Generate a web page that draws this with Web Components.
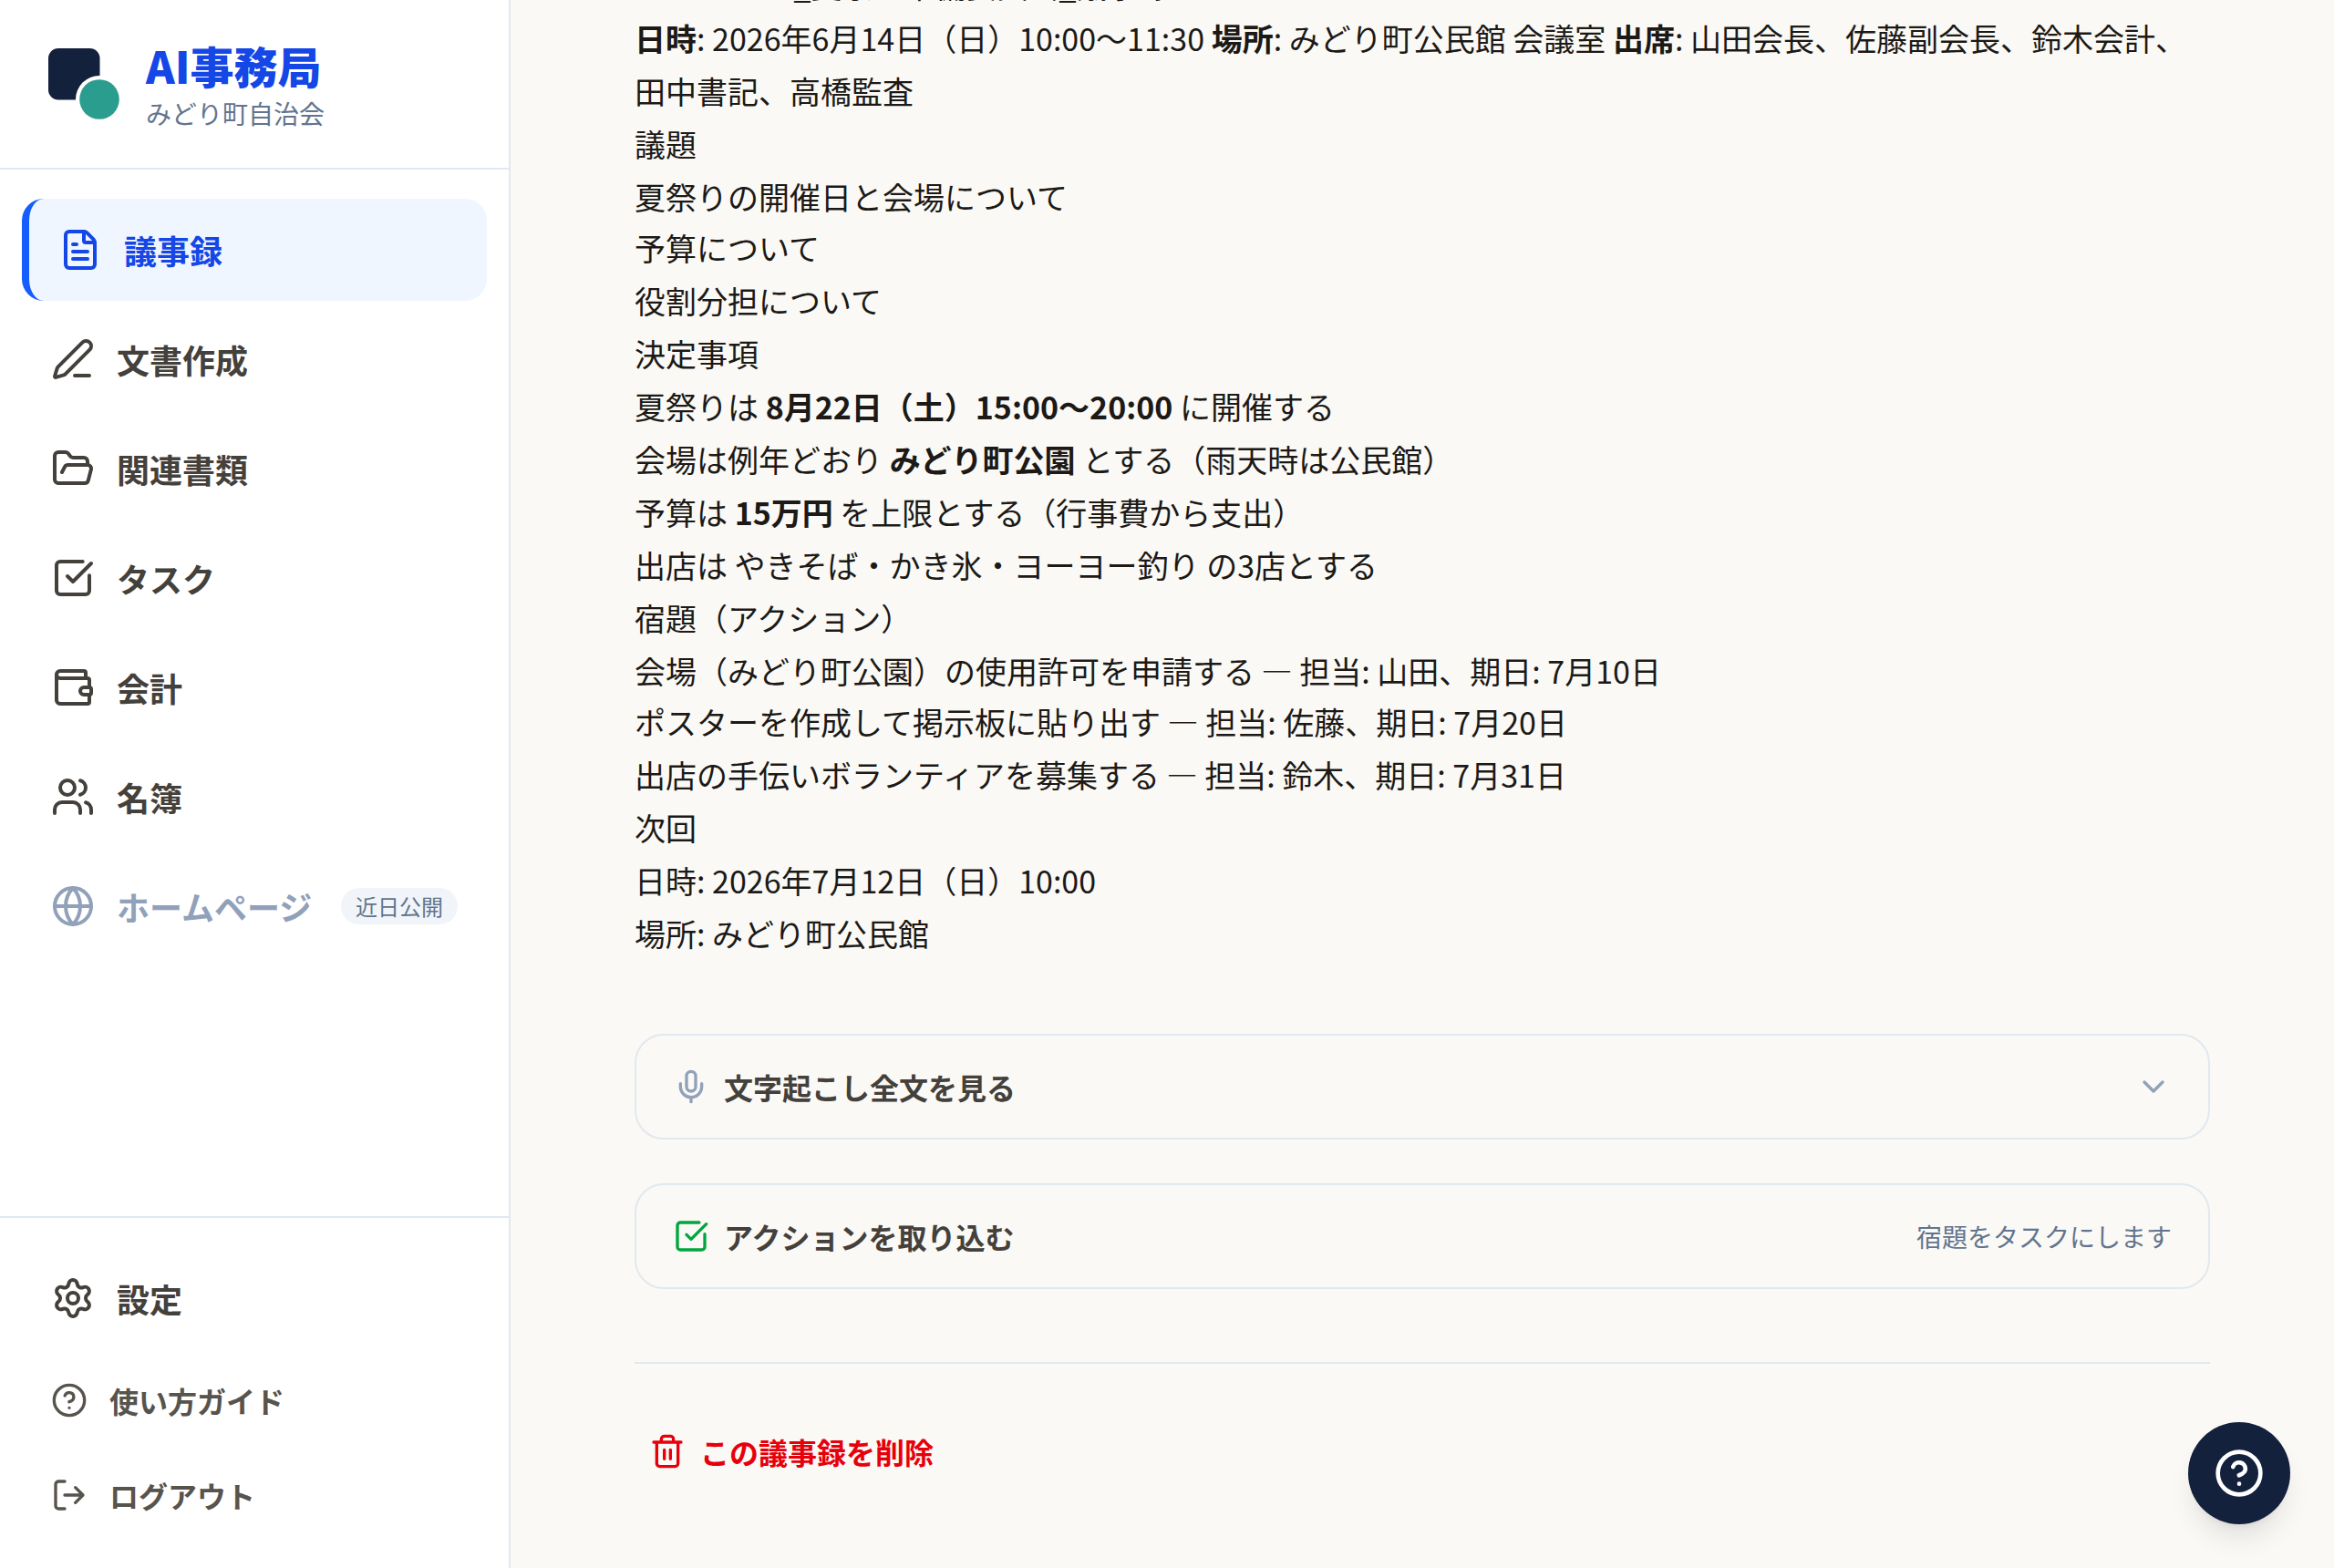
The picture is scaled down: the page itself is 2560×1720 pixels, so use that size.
<!DOCTYPE html>
<html lang="ja">
<head>
<meta charset="utf-8">
<title>AI事務局</title>
<style>
html,body{margin:0;height:100%;overflow:hidden}
body{font-family:"Noto Sans CJK JP",sans-serif;font-size:34px;line-height:1.7;color:#1c1917;background:#faf9f5}
</style>
</head>
<body>
<app-shell>
  <app-sidebar slot="side">
    <brand-mark slot="brand" sub="みどり町自治会">AI事務局</brand-mark>
    <nav-item icon="file" active>議事録</nav-item>
    <nav-item icon="pen">文書作成</nav-item>
    <nav-item icon="folder">関連書類</nav-item>
    <nav-item icon="check">タスク</nav-item>
    <nav-item icon="wallet">会計</nav-item>
    <nav-item icon="users">名簿</nav-item>
    <nav-item icon="globe" muted badge="近日公開">ホームページ</nav-item>
    <nav-item slot="foot" icon="gear">設定</nav-item>
    <nav-item slot="foot" icon="help" small>使い方ガイド</nav-item>
    <nav-item slot="foot" icon="logout" small>ログアウト</nav-item>
  </app-sidebar>
  <minutes-body>
    <p>2026-06-14_夏祭り準備委員会_議事録</p>
    <p><b>日時</b>: 2026年6月14日（日）10:00〜11:30 <b>場所</b>: みどり町公民館 会議室 <b>出席</b>: 山田会長、佐藤副会長、鈴木会計、田中書記、高橋監査</p>
    <p>議題</p>
    <p>夏祭りの開催日と会場について</p>
    <p class="tight">予算について</p>
    <p>役割分担について</p>
    <p>決定事項</p>
    <p>夏祭りは <b>8月22日（土）15:00〜20:00</b> に開催する</p>
    <p>会場は例年どおり <b>みどり町公園</b> とする（雨天時は公民館）</p>
    <p>予算は <b>15万円</b> を上限とする（行事費から支出）</p>
    <p>出店は やきそば・かき氷・ヨーヨー釣り の3店とする</p>
    <p>宿題（アクション）</p>
    <p>会場（みどり町公園）の使用許可を申請する — 担当: 山田、期日: 7月10日</p>
    <p class="tight">ポスターを作成して掲示板に貼り出す — 担当: 佐藤、期日: 7月20日</p>
    <p>出店の手伝いボランティアを募集する — 担当: 鈴木、期日: 7月31日</p>
    <p>次回</p>
    <p>日時: 2026年7月12日（日）10:00</p>
    <p>場所: みどり町公民館</p>
  </minutes-body>
  <action-card icon="mic" tone="#90a1b9">文字起こし全文を見る<ui-icon slot="end" name="chevron" style="color:#90a1b9"></ui-icon></action-card>
  <action-card icon="check" tone="#00a63e">アクションを取り込む<span slot="end">宿題をタスクにします</span></action-card>
  <danger-zone>この議事録を削除</danger-zone>
  <help-fab slot="float"></help-fab>
</app-shell>
<script>
const ICONS={
file:'<path d="M6 22a2 2 0 0 1-2-2V4a2 2 0 0 1 2-2h8a2.4 2.4 0 0 1 1.704.706l3.588 3.588A2.4 2.4 0 0 1 20 8v12a2 2 0 0 1-2 2z"/><path d="M14 2v5a1 1 0 0 0 1 1h5M10 9H8M16 13H8M16 17H8"/>',
pen:'<path d="M13 21h8M21.174 6.812a1 1 0 0 0-3.986-3.987L3.842 16.174a2 2 0 0 0-.5.83l-1.321 4.352a.5.5 0 0 0 .623.622l4.353-1.32a2 2 0 0 0 .83-.497z"/>',
folder:'<path d="m6 14 1.5-2.9A2 2 0 0 1 9.24 10H20a2 2 0 0 1 1.94 2.5l-1.54 6a2 2 0 0 1-1.95 1.5H4a2 2 0 0 1-2-2V5a2 2 0 0 1 2-2h3.9a2 2 0 0 1 1.69.9l.81 1.2a2 2 0 0 0 1.67.9H18a2 2 0 0 1 2 2v2"/>',
check:'<path d="M21 10.656V19a2 2 0 0 1-2 2H5a2 2 0 0 1-2-2V5a2 2 0 0 1 2-2h12.344"/><path d="m9 11 3 3L22 4"/>',
wallet:'<path d="M19 7V4a1 1 0 0 0-1-1H5a2 2 0 0 0 0 4h15a1 1 0 0 1 1 1v4h-3a2 2 0 0 0 0 4h3a1 1 0 0 0 1-1v-2a1 1 0 0 0-1-1"/><path d="M3 5v14a2 2 0 0 0 2 2h15a1 1 0 0 0 1-1v-4"/>',
users:'<path d="M16 21v-2a4 4 0 0 0-4-4H6a4 4 0 0 0-4 4v2M16 3.128a4 4 0 0 1 0 7.744M22 21v-2a4 4 0 0 0-3-3.87"/><circle cx="9" cy="7" r="4"/>',
globe:'<circle cx="12" cy="12" r="10"/><path d="M12 2a14.5 14.5 0 0 0 0 20 14.5 14.5 0 0 0 0-20M2 12h20"/>',
gear:'<path d="M9.671 4.136a2.34 2.34 0 0 1 4.659 0 2.34 2.34 0 0 0 3.319 1.915 2.34 2.34 0 0 1 2.33 4.033 2.34 2.34 0 0 0 0 3.831 2.34 2.34 0 0 1-2.33 4.033 2.34 2.34 0 0 0-3.319 1.915 2.34 2.34 0 0 1-4.659 0 2.34 2.34 0 0 0-3.32-1.915 2.34 2.34 0 0 1-2.33-4.033 2.34 2.34 0 0 0 0-3.831A2.34 2.34 0 0 1 6.35 6.051a2.34 2.34 0 0 0 3.319-1.915"/><circle cx="12" cy="12" r="3"/>',
help:'<circle cx="12" cy="12" r="10"/><path d="M9.09 9a3 3 0 0 1 5.83 1c0 2-3 3-3 3M12 17h.01"/>',
logout:'<path d="m16 17 5-5-5-5M21 12H9M9 21H5a2 2 0 0 1-2-2V5a2 2 0 0 1 2-2h4"/>',
mic:'<path d="M12 19v3M19 10v2a7 7 0 0 1-14 0v-2"/><rect x="9" y="2" width="6" height="13" rx="3"/>',
chevron:'<path d="m6 9 6 6 6-6"/>',
trash:'<path d="M10 11v6M14 11v6M19 6v14a2 2 0 0 1-2 2H7a2 2 0 0 1-2-2V6M3 6h18M8 6V4a2 2 0 0 1 2-2h4a2 2 0 0 1 2 2v2"/>'
};
function define(name,render){
  customElements.define(name,class extends HTMLElement{
    constructor(){super();this.attachShadow({mode:'open'})}
    connectedCallback(){this.shadowRoot.innerHTML=render(this)}
  });
}
define('ui-icon',el=>`<style>:host{display:block;flex:none;width:var(--icon,40px);height:var(--icon,40px)}svg{display:block;width:100%;height:100%;fill:none;stroke:currentColor;stroke-width:2;stroke-linecap:round;stroke-linejoin:round}</style><svg viewBox="0 0 24 24">${ICONS[el.getAttribute('name')]}</svg>`);
define('app-shell',()=>`<style>
:host{display:flex;height:1720px;width:2560px;overflow:hidden}
main{flex:1;min-width:0;height:1720px;box-sizing:border-box;padding-bottom:80px;display:flex;flex-direction:column;justify-content:flex-end;align-items:center}
.col{width:1728px;display:flex;flex-direction:column}
</style><slot name="side"></slot><main><div class="col"><slot></slot></div></main><slot name="float"></slot>`);
define('app-sidebar',()=>`<style>
:host{display:flex;flex-direction:column;box-sizing:border-box;width:560px;height:100%;flex:none;background:#fff;border-right:2px solid #e2e8f0}
header{height:184px;padding:0 48px;border-bottom:2px solid #e2e8f0;display:flex;align-items:center}
nav{flex:1;padding:32px 24px;display:flex;flex-direction:column;gap:8px}
footer{border-top:2px solid #e2e8f0;padding:32px 24px;display:flex;flex-direction:column;gap:8px}
</style><header><slot name="brand"></slot></header><nav><slot></slot></nav><footer><slot name="foot"></slot></footer>`);
define('brand-mark',el=>`<style>
:host{display:flex;align-items:center;gap:24px}
svg{width:88px;height:88px;flex:none}
.t{font-size:48px;line-height:60px;font-weight:900;color:#1447e6;padding-top:2px}
.s{font-size:28px;line-height:42px;color:#62748e;margin-top:2px}
</style><svg viewBox="48 48 88 88"><rect x="53" y="53" width="56.5" height="56.5" rx="11" fill="#14213d"/><circle cx="109" cy="109" r="26" fill="#fff"/><circle cx="109" cy="109" r="21.8" fill="#2a9d8f"/></svg><div><div class="t"><slot></slot></div><div class="s">${el.getAttribute('sub')}</div></div>`);
define('nav-item',el=>`<style>
:host{display:flex;align-items:center;gap:24px;box-sizing:border-box;height:112px;padding:0 32px;border-radius:24px;font-size:36px;line-height:54px;font-weight:700;color:#44403b;--icon:48px}
:host([active]){background:#eff6ff;color:#1447e6;border-left:8px solid #155dfc}
:host([muted]){color:#90a1b9}
:host([small]){height:96px;font-size:32px;line-height:48px;color:#57534d;--icon:40px}
.b{margin-left:auto;font-size:24px;line-height:32px;padding:4px 16px;border-radius:20px;background:#f1f5f9;color:#62748e;font-weight:400}
</style><ui-icon name="${el.getAttribute('icon')}"></ui-icon><span><slot></slot></span>${el.hasAttribute('badge')?`<span class="b">${el.getAttribute('badge')}</span>`:''}`);
define('minutes-body',()=>`<style>
:host{display:block;margin-bottom:81px;line-height:58px}
::slotted(p){margin:0}
::slotted(p.tight){margin-top:-2px}
</style><slot></slot>`);
define('action-card',el=>`<style>
:host{display:flex;align-items:center;gap:16px;box-sizing:border-box;height:116px;padding:0 40px;margin-bottom:48px;border:2px solid #e2e8f0;border-radius:32px;font-size:32px;line-height:48px;font-weight:700;color:#44403b}
.i{color:${el.getAttribute('tone')}}
.end{margin-left:auto;font-size:28px;line-height:42px;font-weight:400;color:#62748e}
</style><ui-icon class="i" name="${el.getAttribute('icon')}"></ui-icon><span><slot></slot></span><div class="end"><slot name="end"></slot></div>`);
define('danger-zone',()=>`<style>
:host{display:block;margin-top:32px;border-top:2px solid #e2e8f0;padding-top:48px}
.btn{display:flex;align-items:center;gap:16px;height:96px;padding:0 16px;font-size:32px;line-height:48px;font-weight:700;color:#e7000b}
</style><div class="btn"><ui-icon name="trash"></ui-icon><span><slot></slot></span></div>`);
define('help-fab',()=>`<style>
:host{position:fixed;right:48px;bottom:48px;width:112px;height:112px;border-radius:50%;background:#14213d;color:#fff;display:flex;align-items:center;justify-content:center;--icon:56px;box-shadow:0 20px 30px -6px rgba(0,0,0,.1),0 8px 12px -8px rgba(0,0,0,.1)}
</style><ui-icon name="help"></ui-icon>`);
</script>
</body>
</html>
